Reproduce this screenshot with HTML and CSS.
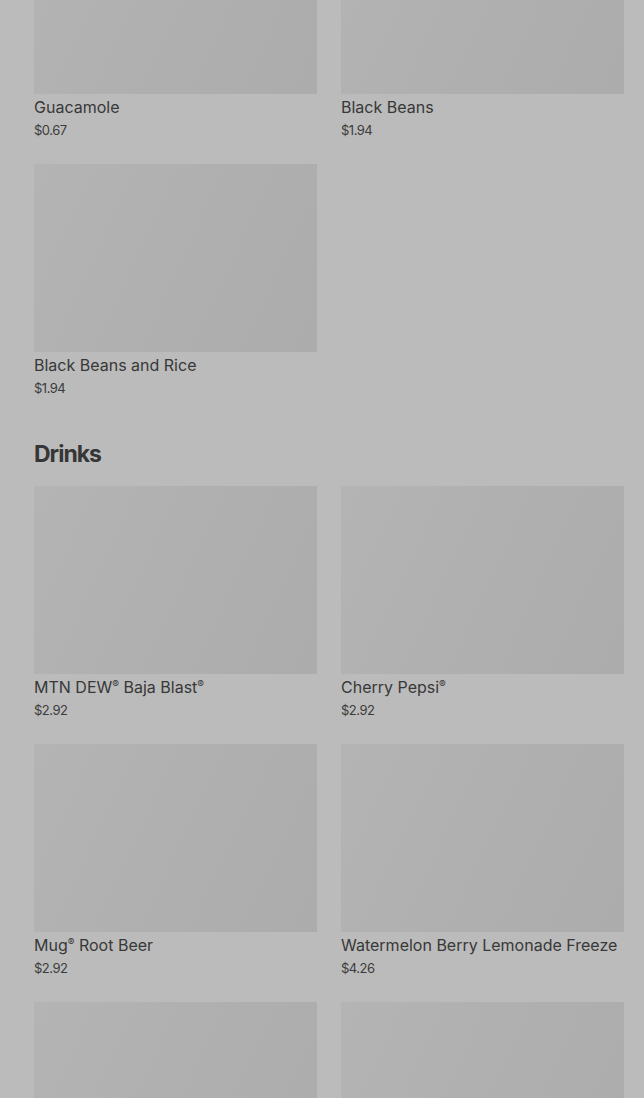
FILE: index.html
```html
<!DOCTYPE html>
<html>
<head>
    <meta charset="UTF-8">
    <link rel="stylesheet" href="styles.css">
</head>
<body>
    <div class="menu">
        <!-- section above is scrolled out of view -->
        <section class="category">
            <div class="items">
                <div class="item">
                    <div class="thumb"></div>
                    <div class="name">Guacamole</div>
                    <div class="price">$0.67</div>
                </div>
                <div class="item">
                    <div class="thumb"></div>
                    <div class="name">Black Beans</div>
                    <div class="price">$1.94</div>
                </div>
                <div class="item">
                    <div class="thumb"></div>
                    <div class="name">Black Beans and Rice</div>
                    <div class="price">$1.94</div>
                </div>
            </div>
        </section>

        <section class="category">
            <h2>Drinks</h2>
            <div class="items">
                <div class="item">
                    <div class="thumb"></div>
                    <div class="name">MTN DEW<sup>®</sup> Baja Blast<sup>®</sup></div>
                    <div class="price">$2.92</div>
                </div>
                <div class="item">
                    <div class="thumb"></div>
                    <div class="name">Cherry Pepsi<sup>®</sup></div>
                    <div class="price">$2.92</div>
                </div>
                <div class="item">
                    <div class="thumb"></div>
                    <div class="name">Mug<sup>®</sup> Root Beer</div>
                    <div class="price">$2.92</div>
                </div>
                <div class="item">
                    <div class="thumb"></div>
                    <div class="name">Watermelon Berry Lemonade Freeze</div>
                    <div class="price">$4.26</div>
                </div>
                <div class="item">
                    <div class="thumb"></div>
                    <div class="name">Pepsi<sup>®</sup></div>
                    <div class="price">$2.92</div>
                </div>
                <div class="item">
                    <div class="thumb"></div>
                    <div class="name">Diet Pepsi<sup>®</sup></div>
                    <div class="price">$2.92</div>
                </div>
            </div>
        </section>
    </div>
</body>
</html>
```

FILE: styles.css
```css
html, body {
    margin: 0;
    height: 100%;
    overflow: hidden;
}
body {
    font-family: Inter, Roboto, "Liberation Sans", sans-serif;
    background-color: #bbbbbb;
    color: #383838;
}
.menu {
    padding: 0 20px 0 34px;
    margin-top: -94px; /* page is scrolled */
}
.category {
    margin-bottom: 40px;
}
.category h2 {
    margin: 0 0 16px;
    font-size: 23px;
    line-height: 32px;
    font-weight: 700;
    letter-spacing: -1px;
    color: #363636;
}
.items {
    display: grid;
    grid-template-columns: 1fr 1fr;
    column-gap: 24px;
    row-gap: 24px;
}
.thumb {
    height: 188px;
    background: linear-gradient(115deg, #b4b4b4 0%, #b0b0b0 45%, #acacac 100%);
}
.name {
    margin-top: 1px;
    font-size: 16px;
    line-height: 24px;
    font-weight: 400;
    white-space: nowrap;
}
.name sup {
    font-size: 10px;
    line-height: 0;
    vertical-align: 5px;
}
.price {
    margin-top: 1px;
    font-size: 13px;
    line-height: 20px;
    letter-spacing: -0.5px;
    color: #3c3c3c;
}
```
